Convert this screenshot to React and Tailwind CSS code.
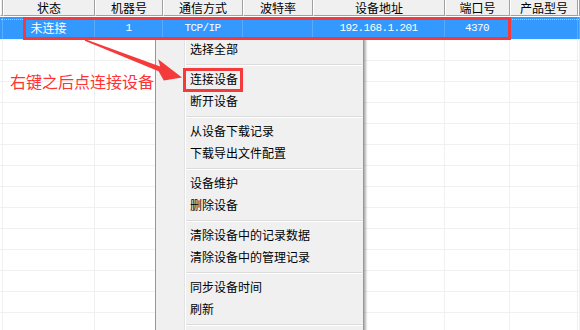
import React from "react";

const cols = [3, 92, 68, 80, 70, 132, 65, 68, 2];
const headers = ["", "状态", "机器号", "通信方式", "波特率", "设备地址", "端口号", "产品型号", ""];
const row1 = ["", "未连接", "1", "TCP/IP", "", "192.168.1.201", "4370", "", ""];
const mono = [false, false, true, true, true, true, true, false, false];

const menu = [
  ["选择全部"],
  ["连接设备", "断开设备"],
  ["从设备下载记录", "下载导出文件配置"],
  ["设备维护", "删除设备"],
  ["清除设备中的记录数据", "清除设备中的管理记录"],
  ["同步设备时间", "刷新"],
  ["x"],
];

export default function App() {
  const rows = Array.from({ length: 14 });
  return (
    <div
      className="relative w-[580px] h-[330px] overflow-hidden bg-white"
      style={{ fontFamily: '"Noto Sans CJK SC", "Noto Sans", sans-serif' }}
    >
      {/* header */}
      <div className="flex h-[17px] pb-[1px]">
        {cols.map((w, i) => (
          <div
            key={i}
            style={{ width: w }}
            className="shrink-0 h-[16px] bg-[#f0f0f0] border-b border-r border-b-[#a0a0a0] border-r-[#a0a0a0] border-l border-l-white flex items-center justify-center text-[12px] leading-none text-black"
          >
            {headers[i]}
          </div>
        ))}
      </div>
      {/* selected row */}
      <div className="relative flex h-[23px] border-b border-[#f0f0f0]">
        {cols.map((w, i) => (
          <div
            key={i}
            style={{ width: w }}
            className={
              "shrink-0 h-full bg-[#3399ff] border-r border-[#5aacff] flex items-center justify-center text-white " +
              (mono[i]
                ? "text-[11px] tracking-[-0.6px] font-['Liberation_Mono',monospace]"
                : "text-[12px]")
            }
          >
            {row1[i]}
          </div>
        ))}
        <div className="absolute left-[1px] right-[1px] top-[2px] border-t border-dotted border-[#f7c46c]" />
      </div>
      {rows.map((_, r) => (
        <div key={r} className="flex h-[21px] border-b border-[#f0f0f0]">
          {cols.map((w, i) => (
            <div
              key={i}
              style={{ width: w }}
              className="shrink-0 h-full border-r border-[#f0f0f0]"
            />
          ))}
        </div>
      ))}

      {/* context menu */}
      <div className="absolute left-[155px] top-[37px] w-[209px] h-[320px] bg-[#f0f0f0] border border-[#979797] shadow-[2px_2px_2px_rgba(0,0,0,0.3)]">
        <div className="absolute left-[28px] top-0 bottom-0 w-[2px] border-l border-[#e2e3e3] border-r border-r-white" />
        <div className="relative flex flex-col">
          {menu.map((sec, si) => (
            <div key={si} className="flex flex-col">
              {si > 0 && (
                <div className="ml-[30px] mr-[1px] mt-[4px] mb-[2px] h-[2px] border-t border-[#dcdcdc] border-b border-b-white" />
              )}
              {sec.map((t) =>
                t === "x" ? null : (
                  <div
                    key={t}
                    className="h-[22px] pl-[34px] flex items-center text-[12px] leading-none text-black"
                  >
                    {t}
                  </div>
                )
              )}
            </div>
          ))}
        </div>
      </div>

      {/* annotations */}
      <div className="absolute left-[23px] top-[17px] w-[488px] h-[23px] border-[3px] border-[#f43a3a]" />
      <div className="absolute left-[183px] top-[68px] w-[60px] h-[24px] border-[3px] border-[#f43a3a]" />
      <div className="absolute left-[10px] top-[73px] text-[16px] leading-[16px] text-[#ff3333] whitespace-nowrap">
        右键之后点连接设备
      </div>
      <svg
        className="absolute left-0 top-0"
        width="580"
        height="330"
        viewBox="0 0 580 330"
      >
        <polygon
          points="84.7,40.8 85.3,39.2 160.2,66.5 158.2,59.2 182,77.5 163.8,80.4 158.6,71.2"
          fill="#f43a3a"
        />
      </svg>
    </div>
  );
}
